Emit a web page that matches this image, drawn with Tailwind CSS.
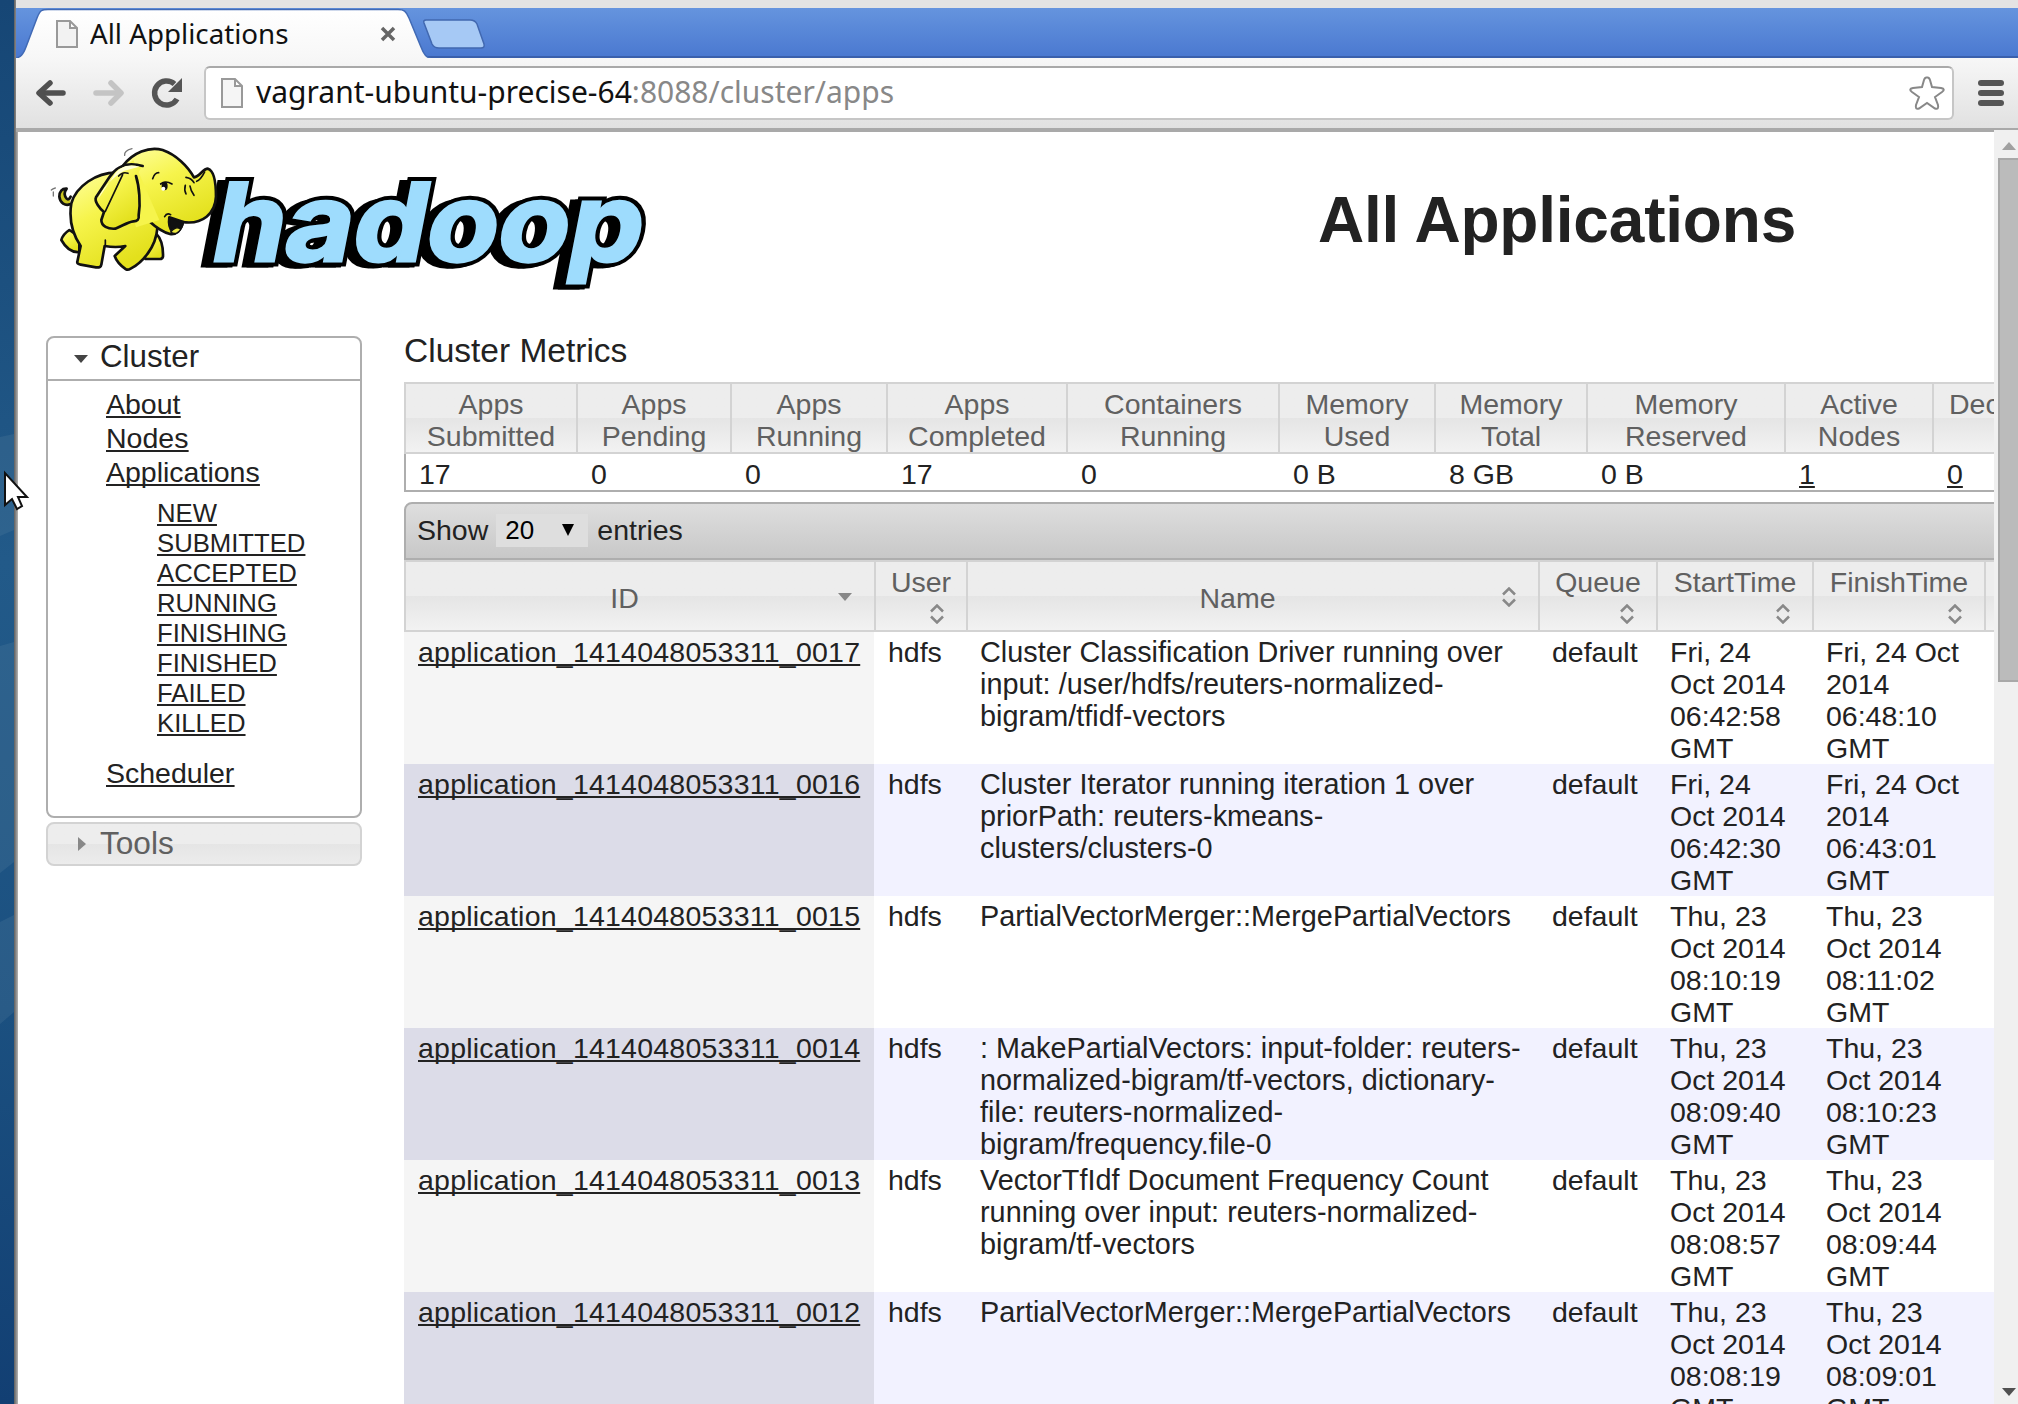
<!DOCTYPE html>
<html lang="en">
<head>
<meta charset="utf-8">
<title>All Applications</title>
<script src="https://cdn.jsdelivr.net/npm/@tailwindcss/browser@4"></script>
</head>
<body class="w-[2018px] h-[1404px] overflow-hidden bg-white relative flex font-['Liberation_Sans',Arial,sans-serif] text-[28.5px] leading-[32px] text-[#222]">

<!-- desktop strip -->
<div class="w-[14px] h-full shrink-0">
<svg class="block" width="14" height="1404" viewBox="0 0 14 1404"><defs><linearGradient id="desk" x1="0" y1="0" x2="0" y2="1"><stop offset="0" stop-color="#164675"/><stop offset=".4" stop-color="#225a89"/><stop offset=".72" stop-color="#1b5080"/><stop offset="1" stop-color="#123f73"/></linearGradient></defs><rect width="14" height="1404" fill="url(#desk)"/><path d="M0 437L14 434V530L0 536zM0 646L14 642V862L0 873zM0 922L14 915V1012L0 1024z" fill="#8ab" fill-opacity=".13"/></svg>
</div>
<div class="w-[4px] h-full shrink-0 bg-linear-to-r from-[#5f5f5f] to-[#b4b4b4]"></div>

<main class="w-[2000px] h-full flex flex-col">
  <!-- browser chrome -->
  <div class="h-[132px] shrink-0 flex flex-col -ml-[2px]">
    <div class="h-[8px] bg-[#e3e3e3] shrink-0"></div>
    <div class="h-[50px] shrink-0 bg-linear-to-b from-[#6594de] to-[#4a78d0] relative">
      <div class="absolute left-[410px] right-0 bottom-0 h-[2px] bg-[#3a60ac]"></div>
      <svg class="block relative" width="500" height="50" viewBox="16 8 500 50">
        <defs><linearGradient id="tab" x1="0" y1="0" x2="0" y2="1"><stop offset="0" stop-color="#fff"/><stop offset="1" stop-color="#f7f7f7"/></linearGradient></defs>
        <path d="M14 59C21 57 23 55 26 47L37 18C40 10 42 9.500 48 9.500H398C404 9.500 406 11 409 18L421 47C424 55 426 57 432 59z" fill="url(#tab)" stroke="#416ab5" stroke-width="1.500"/>
        <path d="M426 20H470Q475 20 477 24L484 44Q485 48 481 48H439Q434 48 432 44L424 23Q423 20 426 20z" fill="#a6c9f5" stroke="#4168b0" stroke-width="1.500"/>
        <path d="M57 21H70L77 28V47H57zM70 21V28H77" fill="#f2f2f2" stroke="#999" stroke-width="2"/>
        <path d="M382 28L394 40M394 28L382 40" stroke="#666" stroke-width="3.500"/>
      </svg>
      <div class="absolute left-[74px] top-[8px] w-[300px] text-[28px] leading-[34px] text-[#111] font-['Noto_Sans',sans-serif] whitespace-nowrap"><span class="inline-block origin-left scale-x-[.99]">All Applications</span></div>
    </div>
    <div class="h-[70px] shrink-0 bg-linear-to-b from-[#f7f7f7] to-[#e1e1e1] flex items-start pt-2 pl-5">
      <svg class="w-[168px] h-[54px] shrink-0" viewBox="36 66 168 54" fill="none">
        <g stroke="#505050" stroke-width="5.500" stroke-linecap="round"><path d="M40 93H63"/><path d="M50 83L39 93L50 103" stroke-linejoin="round"/></g>
        <g stroke="#c4c4c4" stroke-width="5.500" stroke-linecap="round"><path d="M96 93H119"/><path d="M111 83L121 93L111 103" stroke-linejoin="round"/></g>
        <path d="M177 99A12 12 0 1 1 174.500 84" stroke="#555" stroke-width="5.500"/><path d="M182 78V92H168z" fill="#555"/>
      </svg>
      <div class="w-[1750px] h-[54px] shrink-0 bg-white border-2 border-[#c6c6c6] border-t-[#a9a9a9] rounded-md flex items-center pl-[14px] pr-[6px]">
        <svg class="w-6 h-8 shrink-0" viewBox="219 77 24 32"><path d="M221 79H234L241 86V107H221zM234 79V86H241" fill="#f5f5f5" stroke="#999" stroke-width="2"/></svg>
        <div class="ml-[12px] mb-[2px] w-[1580px] text-[30px] leading-[36px] text-[#888] font-['Noto_Sans',sans-serif] whitespace-nowrap"><span class="text-[#111]">vagrant-ubuntu-precise-64</span>:8088/cluster/apps</div>
        <svg class="w-[38px] h-[38px] ml-auto shrink-0" viewBox="1908 74 38 38"><path d="M1927 77.500Q1929 77 1930 80L1932 87L1941 88Q1946 89 1942 92L1935 97L1938 105Q1939 110 1935 108.500L1927 103L1919 108.500Q1915 110 1916 105L1919 97L1912 92Q1908 89 1913 88L1922 87L1924 80Q1925 77 1927 77.500z" fill="#fff" stroke="#888" stroke-width="2"/></svg>
      </div>
      <div class="ml-6 mt-[14px] flex flex-col gap-1">
        <div class="w-[26px] h-[6px] rounded-sm bg-[#555]"></div><div class="w-[26px] h-[6px] rounded-sm bg-[#555]"></div><div class="w-[26px] h-[6px] rounded-sm bg-[#555]"></div>
      </div>
    </div>
    <div class="h-1 bg-[#a9a9a9] shrink-0"></div>
  </div>

  <div class="flex h-[1272px]">
    <div class="w-[1976px] shrink-0 overflow-hidden">
      <!-- header -->
      <header class="h-[192px] flex">
        <svg class="w-[640px] h-[168px] shrink-0 ml-[12px]" viewBox="30 132 640 168">
          <defs>
            <linearGradient id="el" x1="0" y1="0" x2=".5" y2="1"><stop offset="0" stop-color="#ffffa0"/><stop offset=".45" stop-color="#f6f44c"/><stop offset="1" stop-color="#e3e01c"/></linearGradient>
          </defs>
          <g font-family="Inter, sans-serif" font-weight="700" font-size="108" stroke-linejoin="miter" stroke-miterlimit="3">
            <g transform="translate(199 263) skewX(-11)" fill="#000" stroke="#000"><text textLength="430" lengthAdjust="spacingAndGlyphs" stroke-width="9">hadoop</text></g>
            <g transform="translate(204 263) skewX(-11)" fill="#000" stroke="#000"><text textLength="430" lengthAdjust="spacingAndGlyphs" stroke-width="9">hadoop</text></g>
            <g transform="translate(208 261) skewX(-11)" fill="#000" stroke="#000"><text textLength="430" lengthAdjust="spacingAndGlyphs" stroke-width="11">hadoop</text></g>
            <g transform="translate(208 261) skewX(-11)" fill="#9edcfd" stroke="#9edcfd"><text textLength="430" lengthAdjust="spacingAndGlyphs" stroke-width="3">hadoop</text></g>
          </g>
          <g transform="translate(46 140) scale(.3333)" stroke="#111" stroke-width="8" stroke-linejoin="round" stroke-linecap="round" fill="url(#el)">
            <path d="M70 270C55 280 48 292 46 300C60 325 80 338 100 336L100 290z"/>
            <path d="M330 280C345 295 352 320 351 350Q349 358 340 357H298L290 330z"/>
            <path d="M72 193C58 198 42 190 40 170C40 155 48 145 62 146Q50 162 62 176Q68 182 74 170" fill="#c9c520"/>
            <path d="M215 98C150 96 90 140 76 190C68 240 78 280 104 318L94 365Q92 372 104 374L150 382Q165 384 166 374L176 318Q210 324 238 318L206 348C212 365 228 380 240 388Q246 391 254 386C290 368 330 320 334 265L300 180z"/>
            <path d="M230 78C260 38 310 18 350 30C390 44 425 78 444 112C462 110 470 86 486 86C505 92 510 130 510 170C508 220 470 255 410 246C408 268 390 286 372 282C350 276 330 262 308 242" />
            <path d="M224 90L262 60L340 240L270 262z" stroke="none" fill="#f6f44c"/>
            <path d="M370 232L412 246C408 262 396 280 380 274Q366 262 370 232z" fill="#111"/>
            <path d="M374 276Q390 256 404 268Q392 288 374 276z" stroke-width="4" fill="#eeea40"/>
            <path d="M290 78C250 66 215 74 190 112L150 172C144 184 162 206 174 216L166 240C166 258 186 268 208 266C230 258 245 246 262 244C274 244 280 238 278 226C284 190 280 140 270 108"/>
            <path d="M280 80C250 72 220 76 200 112L156 178C165 150 200 110 235 92z" fill="#ffffd8" stroke="none"/>
            <g fill="none" stroke-width="5"><path d="M178 214L230 104M218 108Q230 94 246 100M320 116Q326 98 338 98M344 132Q358 120 378 132M420 112Q436 114 444 128M452 124Q464 120 476 96M418 136Q414 150 420 162M432 138Q434 152 444 166M356 230Q362 218 374 224M178 300V318"/><path d="M16 150Q20 146 28 144M22 168V156M236 46Q234 32 258 26" stroke="#777" stroke-width="4"/></g>
            <ellipse cx="356" cy="138" rx="9" ry="13" fill="#111" stroke="none"/><circle cx="352" cy="146" r="6" fill="#fff" stroke="none"/>
          </g>
        </svg>
        <h1 class="ml-[648px] mt-[52px] text-[64px] leading-[72px] font-bold whitespace-nowrap tracking-[-.2px]">All Applications</h1>
      </header>

      <div class="flex">
        <!-- sidebar -->
        <nav class="w-[386px] shrink-0 pt-[12px] pl-[28px]">
          <div class="w-[316px] h-[482px] border-2 border-[#aeaeae] rounded-lg">
            <div class="h-[43px] border-b-2 border-[#aeaeae] flex items-center pl-[26px] text-[31.300px]">
              <svg class="w-[14px] h-[8px]" viewBox="0 0 14 8"><path d="M0 0H14L7 8z" fill="#444"/></svg>
              <span class="ml-[12px] -mt-[4px]">Cluster</span>
            </div>
            <div class="pl-[58px] pt-[6px] flex flex-col items-start underline decoration-2 underline-offset-[2px] [text-decoration-skip-ink:none] leading-[34px]">
              <a>About</a><a>Nodes</a><a>Applications</a>
              <div class="pl-[51px] pt-[9px] pb-[18px] flex flex-col text-[25.700px] leading-[30px]">
                <a>NEW</a><a>SUBMITTED</a><a>ACCEPTED</a><a>RUNNING</a><a>FINISHING</a><a>FINISHED</a><a>FAILED</a><a>KILLED</a>
              </div>
              <a>Scheduler</a>
            </div>
          </div>
          <div class="mt-1 w-[316px] h-[44px] border-2 border-[#d3d3d3] rounded-lg bg-linear-to-b from-[#ededed] from-50% via-[#e5e5e5] via-50% to-[#ececec] flex items-center pl-[30px] text-[31.600px] text-[#606060]">
            <svg class="w-[8px] h-[14px]" viewBox="0 0 8 14"><path d="M0 0V14L8 7z" fill="#888"/></svg>
            <span class="ml-[14px] -mt-[3px]">Tools</span>
          </div>
        </nav>

        <section class="w-[1590px] shrink-0 overflow-hidden">
          <h2 class="h-[58px] pt-[9px] text-[33.500px] leading-[36px]">Cluster Metrics</h2>
          <!-- metrics -->
          <div class="w-[1800px]">
            <div class="h-[72px] grid grid-cols-[172px_154px_156px_180px_212px_156px_152px_198px_148px_257px] border-y-2 border-[#d3d3d3] bg-linear-to-b from-[#ededed] from-50% via-[#e5e5e5] via-50% to-[#f2f2f2] text-center text-[#606060] [&>div]:border-l-2 [&>div]:border-[#d3d3d3] [&>div]:pt-1 [&>div]:h-[68px]">
              <div>Apps<br>Submitted</div><div>Apps<br>Pending</div><div>Apps<br>Running</div><div>Apps<br>Completed</div><div>Containers<br>Running</div><div>Memory<br>Used</div><div>Memory<br>Total</div><div>Memory<br>Reserved</div><div>Active<br>Nodes</div><div class="text-left pl-[15px]">Decommissioned</div>
            </div>
            <div class="h-[38px] grid grid-cols-[172px_154px_156px_180px_212px_156px_152px_198px_148px_257px] border-b-2 border-l-2 border-[#aeaeae] [&>div]:pl-[13px] [&>div]:pt-[4px] bg-white">
              <div class="-mr-px">17</div><div>0</div><div>0</div><div>17</div><div>0</div><div>0 B</div><div>8 GB</div><div>0 B</div><div class="underline decoration-2 underline-offset-[2px]">1</div><div class="underline decoration-2 underline-offset-[2px]">0</div>
            </div>
            <div class="mt-[10px] h-[58px] border-2 border-[#aeaeae] rounded-tl-lg bg-linear-to-b from-[#dedede] to-[#c8c8c8] flex items-center pl-[11px] pb-[2px]">
              <span>Show</span>
              <div class="ml-2 w-[92px] h-[33px] bg-[#dedede] flex items-center pl-[9px] pr-[14px] justify-between text-[26px] text-black"><span>20</span><svg class="w-[12px] h-[12px]" viewBox="0 0 12 12"><path d="M0 0H12L6 12z"/></svg></div>
              <span class="ml-[9px]">entries</span>
            </div>
          </div>
          <!-- applications -->
          <div class="w-[1800px]">
            <div class="h-[72px] grid grid-cols-[470px_92px_572px_118px_156px_172px_220px] border-y-2 border-[#d3d3d3] bg-linear-to-b from-[#ededed] from-50% via-[#e5e5e5] via-50% to-[#f2f2f2] text-[#606060] text-center [&>div]:border-l-2 [&>div]:border-[#d3d3d3] [&>div]:h-[68px]">
              <div class="flex items-center"><span class="flex-1 pt-[3px] pl-[5px]">ID</span><svg class="w-[14px] h-[8px] mt-[2px] mr-[22px]" viewBox="0 0 14 8"><path d="M0 0H14L7 8z" fill="#888"/></svg></div>
              <div class="flex flex-col pt-1"><span>User</span><svg class="w-[14px] h-[20px] self-end mr-[22px] mt-[6px]" viewBox="0 0 14 20"><path d="M1 7.500L7 1.500L13 7.500M1 12.500L7 18.500L13 12.500" fill="none" stroke="#888" stroke-width="2.500"/></svg></div>
              <div class="flex items-center"><span class="flex-1 pt-[3px] pl-[5px]">Name</span><svg class="w-[14px] h-[20px] mt-[2px] mr-[22px]" viewBox="0 0 14 20"><path d="M1 7.500L7 1.500L13 7.500M1 12.500L7 18.500L13 12.500" fill="none" stroke="#888" stroke-width="2.500"/></svg></div>
              <div class="flex flex-col pt-1"><span>Queue</span><svg class="w-[14px] h-[20px] self-end mr-[22px] mt-[6px]" viewBox="0 0 14 20"><path d="M1 7.500L7 1.500L13 7.500M1 12.500L7 18.500L13 12.500" fill="none" stroke="#888" stroke-width="2.500"/></svg></div>
              <div class="flex flex-col pt-1"><span>StartTime</span><svg class="w-[14px] h-[20px] self-end mr-[22px] mt-[6px]" viewBox="0 0 14 20"><path d="M1 7.500L7 1.500L13 7.500M1 12.500L7 18.500L13 12.500" fill="none" stroke="#888" stroke-width="2.500"/></svg></div>
              <div class="flex flex-col pt-1"><span>FinishTime</span><svg class="w-[14px] h-[20px] self-end mr-[22px] mt-[6px]" viewBox="0 0 14 20"><path d="M1 7.500L7 1.500L13 7.500M1 12.500L7 18.500L13 12.500" fill="none" stroke="#888" stroke-width="2.500"/></svg></div>
              <div></div>
            </div>
            <div id="rows"></div>
          </div>
        </section>
      </div>
    </div>
    <!-- scrollbar -->
    <div class="w-6 shrink-0 bg-[#f0f0f0] -mt-[2px] h-[1274px] flex flex-col items-end justify-between">
      <div class="w-[20px] flex flex-col">
        <svg class="ml-1 mt-[12px] w-[14px] h-[8px]" viewBox="0 0 14 8"><path d="M7 0L14 8H0z" fill="#a0a0a0"/></svg>
        <div class="mt-[8px] w-[24px] h-[524px] bg-[#bbb] border-2 border-[#a8a8a8]"></div>
      </div>
      <svg class="mr-[2px] mb-[8px] w-[14px] h-[8px]" viewBox="0 0 14 8"><path d="M0 0H14L7 8z" fill="#505050"/></svg>
    </div>
  </div>
</main>

<!-- mouse pointer -->
<svg class="absolute left-[2px] top-[466px]" width="30" height="46" viewBox="2 468 30 46"><path d="M5 475V507L12 501L17 511L22 508L18 499H27z" fill="#fff" stroke="#111" stroke-width="2"/></svg>

<script>
const rows = [
  ["0017", "Cluster Classification Driver running over|input: /user/hdfs/reuters-normalized-|bigram/tfidf-vectors", "Fri, 24|Oct 2014|06:42:58|GMT", "Fri, 24 Oct|2014|06:48:10|GMT"],
  ["0016", "Cluster Iterator running iteration 1 over|priorPath: reuters-kmeans-|clusters/clusters-0", "Fri, 24|Oct 2014|06:42:30|GMT", "Fri, 24 Oct|2014|06:43:01|GMT"],
  ["0015", "PartialVectorMerger::MergePartialVectors", "Thu, 23|Oct 2014|08:10:19|GMT", "Thu, 23|Oct 2014|08:11:02|GMT"],
  ["0014", ": MakePartialVectors: input-folder: reuters-|normalized-bigram/tf-vectors, dictionary-|file: reuters-normalized-|bigram/frequency.file-0", "Thu, 23|Oct 2014|08:09:40|GMT", "Thu, 23|Oct 2014|08:10:23|GMT"],
  ["0013", "VectorTfIdf Document Frequency Count|running over input: reuters-normalized-|bigram/tf-vectors", "Thu, 23|Oct 2014|08:08:57|GMT", "Thu, 23|Oct 2014|08:09:44|GMT"],
  ["0012", "PartialVectorMerger::MergePartialVectors", "Thu, 23|Oct 2014|08:08:19|GMT", "Thu, 23|Oct 2014|08:09:01|GMT"]
];
const br = s => s.replaceAll("|", "<br>");
document.getElementById("rows").innerHTML = rows.map(([id, name, start, finish], i) => `
<div class="h-[132px] grid grid-cols-[470px_93px_572px_118px_156px_172px_219px] whitespace-nowrap ${i % 2 ? "bg-[#f2f2ff]" : "bg-white"}">
<div class="pl-[14px] pt-1 ${i % 2 ? "bg-[#dcdce8]" : "bg-[#f5f5f5]"}"><a class="underline decoration-2 underline-offset-[2px] [text-decoration-skip-ink:none] tracking-[.23px]">application_1414048053311_${id}</a></div>
<div class="pl-[14px] pt-1">hdfs</div><div class="pl-[13px] pt-1 text-[28.800px] tracking-[.03px]">${br(name)}</div><div class="pl-[13px] pt-1">default</div><div class="pl-[13px] pt-1">${br(start)}</div><div class="pl-[13px] pt-1">${br(finish)}</div><div></div></div>`).join("");
</script>
</body>
</html>
